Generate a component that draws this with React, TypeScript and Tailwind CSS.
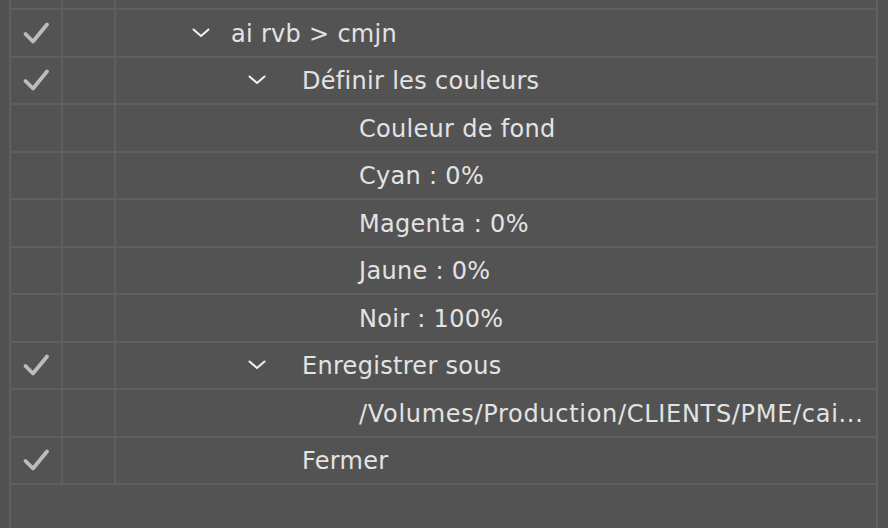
import React from "react";

type Row = { check: boolean; level: number; chevron: boolean; label: string; wide?: boolean };

const rows: Row[] = [
  { check: true, level: 0, chevron: true, label: "ai rvb > cmjn" },
  { check: true, level: 1, chevron: true, label: "Définir les couleurs" },
  { check: false, level: 2, chevron: false, label: "Couleur de fond" },
  { check: false, level: 2, chevron: false, label: "Cyan : 0%" },
  { check: false, level: 2, chevron: false, label: "Magenta : 0%" },
  { check: false, level: 2, chevron: false, label: "Jaune : 0%" },
  { check: false, level: 2, chevron: false, label: "Noir : 100%" },
  { check: true, level: 1, chevron: true, label: "Enregistrer sous" },
  { check: false, level: 2, chevron: false, label: "/Volumes/Production/CLIENTS/PME/cai...", wide: true },
  { check: true, level: 1, chevron: false, label: "Fermer" },
];

// chevron position and the slot before the label, per level
const indents = ["pl-[76px]", "pl-[132px]", "pl-[243px]"];
const slots = ["w-[39px]", "w-[54px]", "w-0"];

function Check() {
  return (
    <svg width="28" height="24" viewBox="0 0 28 24" fill="none">
      <path d="M3.5 13 L11 20.5 L25 3.5" stroke="#bcbcbc" strokeWidth="3.8" strokeLinecap="round" strokeLinejoin="round" />
    </svg>
  );
}

function Chevron() {
  return (
    <svg width="18" height="10" viewBox="0 0 18 10" fill="none">
      <path d="M1.5 1.5 L9 8 L16.5 1.5" stroke="#f2f2f2" strokeWidth="2" strokeLinecap="round" strokeLinejoin="round" />
    </svg>
  );
}

export default function App() {
  return (
    <div
      className="flex h-[528px] w-[888px] overflow-hidden bg-[#535353] text-[#e3e3e3]"
      style={{ fontFamily: '"DejaVu Sans", "Open Sans", sans-serif' }}
    >
      {/* left gutter */}
      <div className="w-[9px] shrink-0 bg-[#515151]" />

      {/* list */}
      <div className="flex w-[869px] shrink-0 flex-col border-x-2 border-[#5f5f5f]">
        {/* partial row above */}
        <div className="flex h-[10px] shrink-0 border-b-2 border-[#5f5f5f]">
          <div className="w-[52px] shrink-0 border-r-2 border-[#5f5f5f]" />
          <div className="w-[53px] shrink-0 border-r-2 border-[#5f5f5f]" />
        </div>

        {rows.map((r) => (
          <div key={r.label} className="flex h-[47.5px] shrink-0 border-b-2 border-[#5f5f5f]">
            <div className="flex w-[52px] shrink-0 items-center justify-center border-r-2 border-[#5f5f5f] pr-[1px]">
              {r.check && <Check />}
            </div>
            <div className="w-[53px] shrink-0 border-r-2 border-[#5f5f5f]" />
            <div className={`flex min-w-0 flex-1 items-center ${indents[r.level]}`}>
              <div className={`flex shrink-0 items-center ${slots[r.level]}`}>{r.chevron && <Chevron />}</div>
              <span
                className={`whitespace-nowrap pt-[2px] text-[24px] leading-none ${
                  r.wide ? "tracking-[0.7px]" : "tracking-[0.3px]"
                }`}
              >
                {r.label}
              </span>
            </div>
          </div>
        ))}

        <div className="flex-1" />
      </div>

      {/* right gutter */}
      <div className="flex-1 bg-[#515151]" />
    </div>
  );
}
